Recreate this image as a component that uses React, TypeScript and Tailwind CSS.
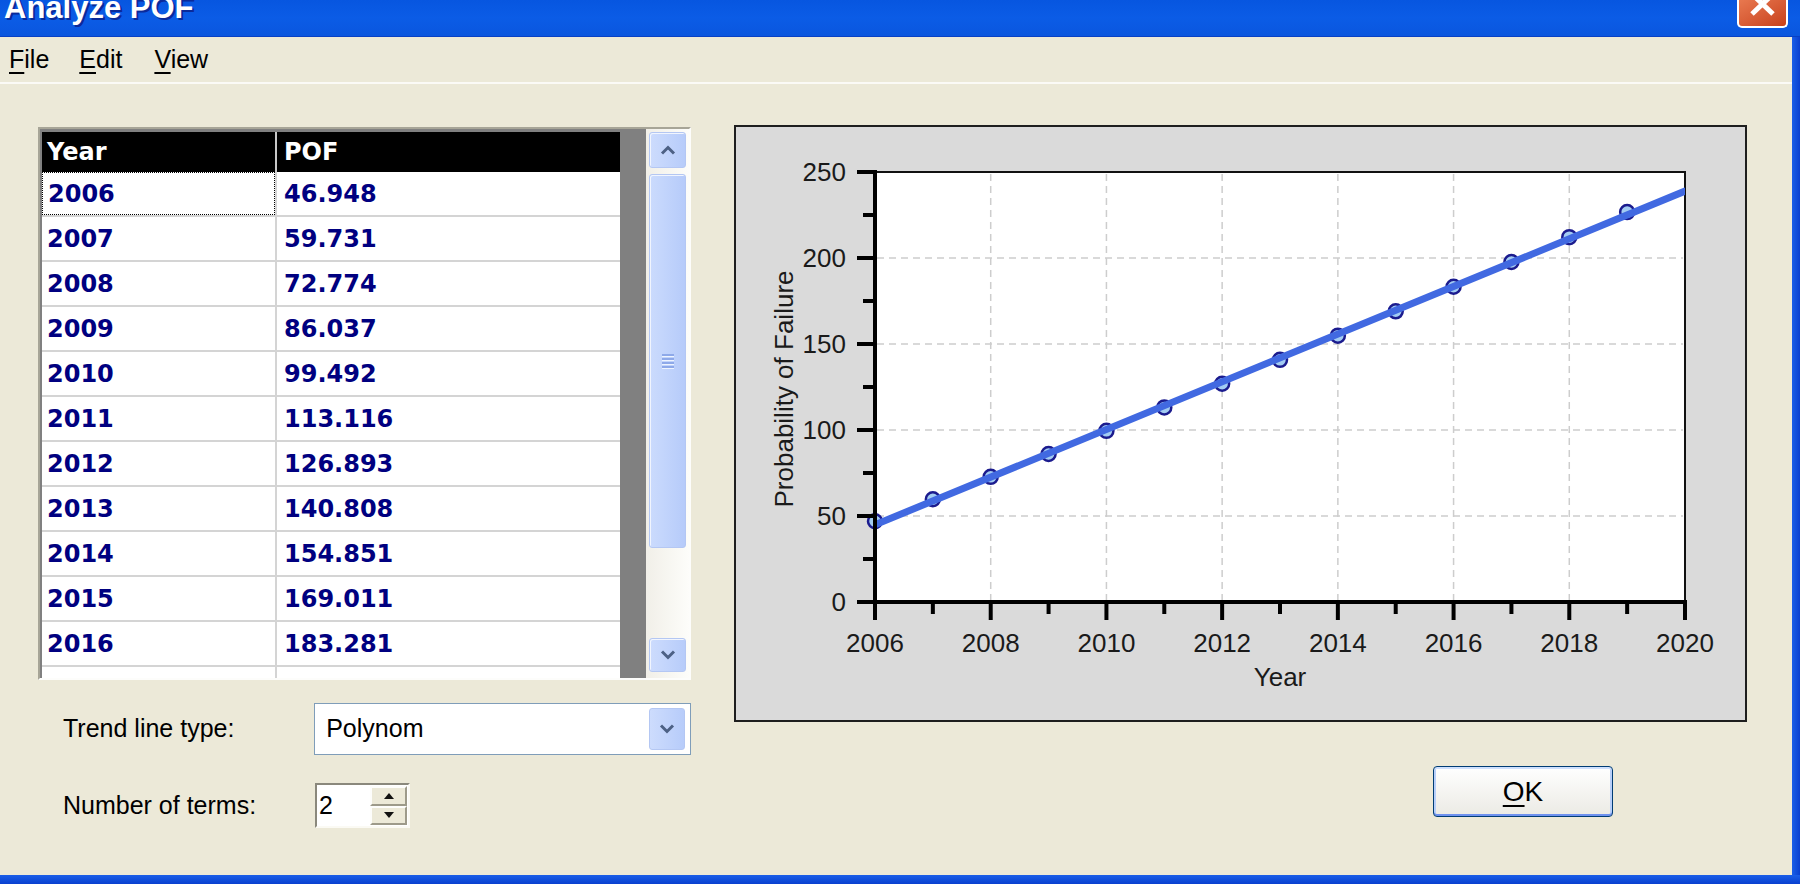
import React from "react";

// grid rows shown in the data table (last one only peeks out below)
const rows: [string, string][] = [
  ["2006", "46.948"],
  ["2007", "59.731"],
  ["2008", "72.774"],
  ["2009", "86.037"],
  ["2010", "99.492"],
  ["2011", "113.116"],
  ["2012", "126.893"],
  ["2013", "140.808"],
  ["2014", "154.851"],
  ["2015", "169.011"],
  ["2016", "183.281"],
  ["", ""],
];

// all points plotted on the chart
const points = [
  46.948, 59.731, 72.774, 86.037, 99.492, 113.116, 126.893, 140.808, 154.851,
  169.011, 183.281, 197.651, 212.12, 226.68,
];

const px = (yr: number) => 139 + (yr - 2006) * (810 / 14);
const py = (v: number) => 475 - v * 1.72;

const Chevron = ({ up }: { up?: boolean }) => (
  <svg width="16" height="10" viewBox="0 0 16 10">
    <path
      d={up ? "M2 8.5 L8 2.5 L14 8.5" : "M2 1.5 L8 7.5 L14 1.5"}
      stroke="#4d6185"
      strokeWidth="3"
      fill="none"
    />
  </svg>
);

const ScrollButton = ({ up, h }: { up?: boolean; h: string }) => (
  <div
    className={`${h} rounded-[3px] border border-[#b4c7f3] bg-gradient-to-r from-[#cddcfd] to-[#b7ccfa] shadow-[inset_1px_1px_0_#f1f5fe] flex items-center justify-center`}
  >
    <Chevron up={up} />
  </div>
);

const Chart = () => {
  const years = Array.from({ length: 15 }, (_, i) => 2006 + i);
  const vals = [0, 25, 50, 75, 100, 125, 150, 175, 200, 225, 250];
  return (
    <svg width="1009" height="593" viewBox="0 0 1009 593">
      <defs>
        <clipPath id="plot">
          <rect x="139" y="45" width="810" height="430" />
        </clipPath>
      </defs>
      <rect x="139" y="45" width="810" height="430" fill="#fff" stroke="#111" strokeWidth="2" />

      {/* dashed grid */}
      {[2008, 2010, 2012, 2014, 2016, 2018].map((yr) => (
        <line key={yr} x1={px(yr)} x2={px(yr)} y1="47" y2="473" stroke="#cdcdcd" strokeWidth="1.5" strokeDasharray="7 5" />
      ))}
      {[50, 100, 150, 200].map((v) => (
        <line key={v} x1="141" x2="947" y1={py(v)} y2={py(v)} stroke="#cdcdcd" strokeWidth="1.5" strokeDasharray="7 5" />
      ))}

      {/* data points, trend line drawn over them */}
      {points.map((v, i) => (
        <circle key={i} cx={px(2006 + i)} cy={py(v)} r="7" fill="#a3ccf2" stroke="#1b1b8e" strokeWidth="2.5" />
      ))}
      <g clipPath="url(#plot)">
        <line x1={px(2006)} y1={py(44.9)} x2={px(2020)} y2={py(238.9)} stroke="#4169e1" strokeWidth="7" strokeLinecap="round" />
      </g>

      {/* axes */}
      <line x1="139" x2="139" y1="43" y2="477" stroke="#000" strokeWidth="4" />
      <line x1="137" x2="951" y1="475" y2="475" stroke="#000" strokeWidth="4" />
      {vals.map((v) => (
        <line key={v} x1={v % 50 === 0 ? 121 : 127} x2="139" y1={py(v)} y2={py(v)} stroke="#000" strokeWidth="4" />
      ))}
      {years.map((yr) => (
        <line key={yr} x1={px(yr)} x2={px(yr)} y1="475" y2={yr % 2 === 0 ? 493 : 487} stroke="#000" strokeWidth="4" />
      ))}

      <g fontFamily="Liberation Sans, Arial, sans-serif" fontSize="26" fill="#1a1a1a">
        {vals
          .filter((v) => v % 50 === 0)
          .map((v) => (
            <text key={v} x="110" y={py(v) + 9} textAnchor="end">
              {v}
            </text>
          ))}
        {years
          .filter((yr) => yr % 2 === 0)
          .map((yr) => (
            <text key={yr} x={px(yr)} y="525" textAnchor="middle">
              {yr}
            </text>
          ))}
        <text x="544" y="559" textAnchor="middle">
          Year
        </text>
        <text transform="translate(57 262) rotate(-90)" textAnchor="middle">
          Probability of Failure
        </text>
      </g>
    </svg>
  );
};

const App = () => {
  return (
    <div className="w-[1800px] h-[884px] overflow-hidden flex flex-col bg-[#0b45d4] font-['Liberation_Sans',Arial,sans-serif]">
      {/* Title bar */}
      <div className="h-[37px] shrink-0 flex justify-between bg-gradient-to-b from-[#0756e0] via-[#0b5ce6] to-[#0a56de] border-b border-[#0840c4]">
        <div className="-mt-[8px] pl-[4px] text-[31px] leading-none font-bold text-white [text-shadow:2px_2px_0_#0a2a9a]">
          Analyze POF
        </div>
        <div className="mr-[12px] w-[51px] h-[28px] rounded-b-[5px] border-x-2 border-b-2 border-white bg-gradient-to-br from-[#e8784f] to-[#c8401a] flex items-start justify-center">
          <svg width="30" height="20" viewBox="0 0 30 20">
            <path d="M4 -6 L25 14 M25 -6 L4 14" stroke="#fff" strokeWidth="5" />
          </svg>
        </div>
      </div>

      <div className="flex-1 flex min-h-0">
        <div className="flex-1 bg-[#ece9d8] flex flex-col">
          {/* Menu */}
          <div className="h-[47px] shrink-0 flex items-center border-b-2 border-[#fbfaf6] text-[25px] text-black">
            <span className="ml-[9px]">
              <span className="underline decoration-2 underline-offset-[4px]">F</span>ile
            </span>
            <span className="ml-[30px]">
              <span className="underline decoration-2 underline-offset-[4px]">E</span>dit
            </span>
            <span className="ml-[32px]">
              <span className="underline decoration-2 underline-offset-[4px]">V</span>iew
            </span>
          </div>

          <div className="flex-1 flex pl-[38px] pt-[41px]">
            {/* Left column */}
            <div className="w-[653px] flex flex-col">
              <div className="mt-[2px] h-[553px] border-2 border-[#a7a597] border-b-[#fdfdfb] border-r-[#fdfdfb] bg-[#808080] flex overflow-hidden">
                {/* grid */}
                <div className="w-[578px] ml-[2px] mt-[3px] flex flex-col overflow-hidden font-['DejaVu_Sans',sans-serif] font-bold text-[24px]">
                  <div className="h-[40px] shrink-0 flex bg-black text-white">
                    <div className="w-[235px] border-r-2 border-[#c8c8c8] pl-[5px] flex items-center">Year</div>
                    <div className="flex-1 pl-[7px] flex items-center">POF</div>
                  </div>
                  {rows.map(([yr, pof], i) => (
                    <div key={i} className="h-[45px] shrink-0 flex bg-white text-[#000080] border-b-2 border-[#d4d4d4]">
                      <div className="w-[235px] border-r-2 border-[#d4d4d4] flex items-center">
                        <div
                          className={`w-full h-full flex items-center pl-[5px] ${
                            i === 0 ? "border border-dotted border-black" : ""
                          }`}
                        >
                          {yr}
                        </div>
                      </div>
                      <div className="flex-1 pl-[7px] flex items-center">{pof}</div>
                    </div>
                  ))}
                </div>
                <div className="w-[26px]" />
                {/* scrollbar */}
                <div className="w-[43px] bg-gradient-to-r from-[#f1efe8] to-[#fdfdfa] flex flex-col px-[3px] pt-[3px] pb-[6px]">
                  <ScrollButton up h="h-[36px]" />
                  <div className="mt-[6px] h-[374px] rounded-[3px] border border-[#b4c7f3] bg-gradient-to-r from-[#cbdbfd] to-[#b6cbfa] shadow-[inset_1px_1px_0_#f1f5fe] flex flex-col items-center justify-center gap-[2px]">
                    {[0, 1, 2, 3].map((k) => (
                      <div key={k} className="w-[12px] h-[2px] bg-[#8ea9e9] shadow-[0_1px_0_#eef4fe]" />
                    ))}
                  </div>
                  <div className="flex-1" />
                  <ScrollButton h="h-[34px]" />
                </div>
              </div>

              {/* Trend line type */}
              <div className="mt-[23px] h-[52px] flex items-center text-[25px] text-black">
                <div className="w-[277px] pl-[25px]">Trend line type:</div>
                <div className="w-[378px] h-full border border-[#7f9db9] bg-white flex items-stretch p-[4px] pr-[5px]">
                  <div className="flex-1 pl-[7px] flex items-center">Polynom</div>
                  <div className="w-[36px] rounded-[3px] border border-[#b4c7f3] bg-gradient-to-r from-[#cddcfd] to-[#b7ccfa] flex items-center justify-center">
                    <Chevron />
                  </div>
                </div>
              </div>

              {/* Number of terms */}
              <div className="mt-[28px] h-[45px] flex items-center text-[25px] text-black">
                <div className="w-[277px] pl-[25px]">Number of terms:</div>
                <div className="w-[95px] h-full border-2 border-[#8a887c] border-b-[#fbfaf4] border-r-[#fbfaf4] bg-white flex">
                  <div className="flex-1 pl-[2px] flex items-center">2</div>
                  <div className="w-[38px] flex flex-col py-[1px] pr-[1px]">
                    {["M0 6 L5 0 L10 6 Z", "M0 0 L10 0 L5 6 Z"].map((d) => (
                      <div
                        key={d}
                        className="flex-1 bg-[#ece9d8] border-2 border-[#fdfdfb] border-b-[#9d9a8a] border-r-[#9d9a8a] flex items-center justify-center"
                      >
                        <svg width="10" height="6" viewBox="0 0 10 6">
                          <path d={d} fill="#111" />
                        </svg>
                      </div>
                    ))}
                  </div>
                </div>
              </div>
            </div>

            {/* Right column */}
            <div className="ml-[43px] flex flex-col">
              <div className="w-[1013px] h-[597px] border-2 border-[#1e1e1e] bg-[#dadada]">
                <Chart />
              </div>
              <div className="mt-[44px] pl-[699px]">
                <button className="w-[180px] h-[51px] rounded-[4px] border border-[#003c74] bg-gradient-to-b from-white to-[#ebeae4] shadow-[inset_0_-2px_0_#6f92ef,inset_0_2px_0_#cfe0fd,inset_2px_0_0_#b8cff9,inset_-2px_0_0_#b8cff9] text-[28px] text-black flex items-center justify-center">
                  <span className="underline decoration-2 underline-offset-[4px]">O</span>K
                </button>
              </div>
            </div>
          </div>
        </div>
        <div className="w-[8px] bg-gradient-to-r from-[#1a5ee8] to-[#0a3fcf]" />
      </div>
      <div className="h-[9px] shrink-0 bg-gradient-to-b from-[#1a5ee8] to-[#0a3fcf]" />
    </div>
  );
};

export default App;
